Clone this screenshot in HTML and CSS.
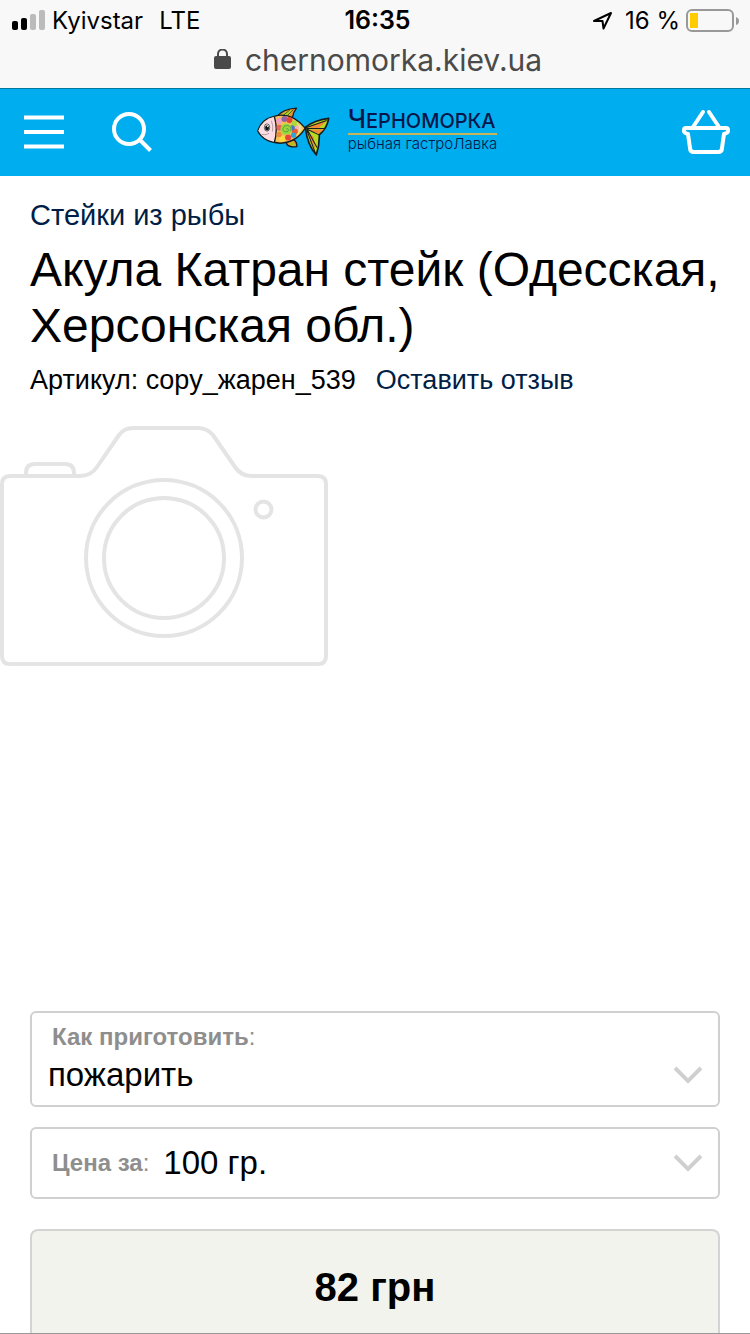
FILE: index.html
```html
<!DOCTYPE html>
<html lang="ru">
<head>
<meta charset="utf-8">
<meta name="viewport" content="width=device-width, initial-scale=1">
<title>Акула Катран стейк (Одесская, Херсонская обл.)</title>
<link rel="stylesheet" href="styles.css">
</head>
<body>
<div class="browser">
  <div class="status">
    <div class="status-side">
      <svg class="signal" viewBox="0 0 34 20" width="34" height="20" aria-hidden="true">
        <rect x="0" y="11" width="6" height="9" rx="2"/>
        <rect x="9" y="8" width="6" height="12" rx="2"/>
        <rect x="18" y="4" width="6" height="16" rx="2" fill="#bbb"/>
        <rect x="27" y="0" width="6" height="20" rx="2" fill="#bbb"/>
      </svg>
      <span class="carrier">Kyivstar</span>
      <span>LTE</span>
    </div>
    <div class="time">16:35</div>
    <div class="status-side status-end">
      <svg class="location" viewBox="0 0 20 20" width="20" height="20" aria-hidden="true">
        <path d="M1 11 18 3 10.500 18.500 9.500 11Z" fill="none" stroke="#000" stroke-width="2" stroke-linejoin="round"/>
      </svg>
      <span>16 %</span>
      <svg class="battery" viewBox="0 0 53 24" width="53" height="24" aria-hidden="true">
        <rect x="1" y="2" width="46" height="21" rx="5" fill="none" stroke="#999" stroke-width="2"/>
        <rect x="4" y="5" width="8" height="15" fill="#fc0"/>
        <path d="M50 9q3 1 3 4t-3 4z" fill="#999"/>
      </svg>
    </div>
  </div>
  <div class="address">
    <svg viewBox="0 0 17 22" width="17" height="22" aria-hidden="true">
      <rect x="0" y="7" width="17" height="13" rx="2" fill="#4a4a4a"/>
      <path d="M4 8V5a4.500 4.500 0 0 1 9 0v3" fill="none" stroke="#4a4a4a" stroke-width="2"/>
    </svg>
    <span>chernomorka.kiev.ua</span>
  </div>
</div>

<header class="header">
  <div class="header-side">
    <button class="icon-button" type="button" aria-label="Меню">
      <svg viewBox="0 0 40 34" width="40" height="34"><path d="M0 2.500h40M0 17h40M0 31.500h40" stroke="#fff" stroke-width="4"/></svg>
    </button>
    <button class="icon-button" type="button" aria-label="Поиск">
      <svg viewBox="0 0 40 40" width="40" height="40" fill="none" stroke="#fff" stroke-width="4"><circle cx="17" cy="17" r="15"/><path d="M27.500 27.500 38.500 38.500"/></svg>
    </button>
  </div>
  <a class="logo" href="#">
    <svg class="fish" viewBox="30 37 218 146" width="73" height="49" aria-hidden="true" stroke-linejoin="round">
      <path d="M91 65Q105 43 148 40Q138 52 136 68Z" fill="#f28a35" stroke="#171b20" stroke-width="4"/>
      <path d="M100 61Q116 48 138 45L125 64Z" fill="#b2d720"/>
      <path d="M108 62 128 46M121 62 138 45" stroke="#171b20" stroke-width="2"/>
      <path d="M117 139Q117 151 128 154Q139 157 149 155Q150 142 139 134Z" fill="#ee8d32" stroke="#171b20" stroke-width="4"/>
      <path d="M124 141q6 9 15 12M133 139q2 8 11 12" fill="none" stroke="#aacc21" stroke-width="4"/>
      <path d="M32 108Q43 73 83 64Q133 51 174 100Q148 143 99 145Q50 142 32 108Z" fill="#f5bf5a" stroke="#171b20" stroke-width="4"/>
      <path d="M34 108Q47 73 82 66Q93 104 82 141Q49 136 34 108Z" fill="#fbdce2"/>
      <path d="M82 66Q93 103 82 142" fill="none" stroke="#171b20" stroke-width="4"/>
      <circle cx="96" cy="79" r="9" fill="#f19fc0"/><circle cx="112" cy="73" r="9" fill="#8f62a8"/>
      <circle cx="127" cy="76" r="9" fill="#e64532"/><circle cx="142" cy="86" r="9" fill="#a9d83b"/>
      <circle cx="154" cy="99" r="9" fill="#f2b3b9"/><circle cx="143" cy="110" r="9" fill="#ee5a32"/>
      <circle cx="139" cy="121" r="8" fill="#2ea4dc"/><circle cx="123" cy="128" r="9" fill="#e8423b"/>
      <circle cx="105" cy="132" r="9" fill="#f7de3b"/><circle cx="96" cy="119" r="8" fill="#ee8b37"/>
      <circle cx="97" cy="99" r="9" fill="#e9655c"/><circle cx="135" cy="99" r="8" fill="#4f75c4"/>
      <circle cx="117" cy="103" r="17" fill="#9bd63d"/>
      <path d="M117 103q6-5 7 2t-8 6q-11-2-8-11t14-8q13 5 8 17" fill="none" stroke="#398e47" stroke-width="2"/>
      <path d="M149 84q15 14 2 36M158 91q7 10 0 20" fill="none" stroke="#edf07a" stroke-width="3"/>
      <ellipse cx="60" cy="98" rx="8" ry="11" fill="#fff" stroke="#171b20" stroke-width="2"/>
      <ellipse cx="60" cy="99" rx="6" ry="8" fill="#111"/><circle cx="62" cy="95" r="2" fill="#fff"/>
      <path d="M44 119q14 3 22-4M73 78q7 17 3 32" fill="none" stroke="#171b20" stroke-width="1"/>
      <path d="M174 98Q201 76 244 71Q240 99 216 120Q217 151 207 180Q182 155 174 98Z" fill="#b4dc20" stroke="#171b20" stroke-width="5"/>
      <path d="M181 98Q202 86 238 79L214 100ZM182 105 231 103 213 117ZM184 114Q190 143 203 163L200 127Z" fill="#f48a35"/>
      <path d="M176 99 238 77M177 101 230 101M177 102 215 120M180 104 209 158M178 104 205 176" fill="none" stroke="#171b20" stroke-width="3"/>
    </svg>
    <span class="logo-text">
      <span class="logo-name"><span class="logo-initial">Ч</span>ЕРНОМОРКА</span>
      <span class="logo-sub">рыбная гастроЛавка</span>
    </span>
  </a>
  <div class="header-side header-end">
    <button class="icon-button" type="button" aria-label="Корзина">
      <svg viewBox="0 0 48 45" width="48" height="45" fill="none" stroke="#fff" stroke-width="4" stroke-linecap="round" stroke-linejoin="round">
        <path d="M11 18 21 3M37 18 27 3M4 19H44Q46 19 46 21V22Q46 24 42 25L40 39Q40 43 36 43H12Q8 43 8 39L6 25Q2 24 2 22V21Q2 19 4 19Z"/>
      </svg>
    </button>
  </div>
</header>

<main class="product">
  <div class="intro">
    <a class="category" href="#">Стейки из рыбы</a>
    <h1 class="title">Акула Катран стейк (Одесская, Херсонская обл.)</h1>
    <div class="meta"><span>Артикул: copy_жарен_539</span><a href="#">Оставить отзыв</a></div>
  </div>
  <div class="gallery">
    <svg viewBox="0 0 328 240" width="328" height="240" fill="none" stroke="#e4e4e4" stroke-width="4" role="img" aria-label="Нет фото">
      <path d="M10 50H80Q91 50 97 41L119 9Q124 2 133 2H198Q207 2 213 9L235 41Q241 50 252 50H318Q326 50 326 58V230Q326 238 318 238H10Q2 238 2 230V58Q2 50 10 50Z"/>
      <path d="M26 50V47Q26 38 35 38H65Q74 38 74 47V50"/>
      <circle cx="164" cy="132" r="78"/><circle cx="164" cy="132" r="60"/><circle cx="263.500" cy="83.500" r="8"/>
    </svg>
  </div>
  <form class="options">
    <div class="field field-stacked">
      <label for="cooking"><b>Как приготовить</b>:</label>
      <div class="picker">
        <select id="cooking"><option>пожарить</option></select>
        <svg class="chevron" viewBox="0 0 28 18" width="28" height="18" aria-hidden="true"><path d="M1 2 14 15 27 2" fill="none" stroke="#d0d0d0" stroke-width="4"/></svg>
      </div>
    </div>
    <div class="field">
      <label for="amount"><b>Цена за</b>:</label>
      <div class="picker">
        <select id="amount"><option>100 гр.</option></select>
        <svg class="chevron" viewBox="0 0 28 18" width="28" height="18" aria-hidden="true"><path d="M1 2 14 15 27 2" fill="none" stroke="#d0d0d0" stroke-width="4"/></svg>
      </div>
    </div>
  </form>
  <div class="price">82 грн</div>
</main>
</body>
</html>
```
FILE: styles.css
```css
* { box-sizing: border-box; }

body {
  display: flex;
  flex-direction: column;
  min-height: 100vh;
  margin: 0;
  border-bottom: 1px solid #999;
  background: #fff;
  color: #000;
  font-family: "Liberation Sans", Arial, sans-serif;
}

svg { display: block; flex: none; }
a { color: #001e46; text-decoration: none; }

.browser {
  padding-bottom: 8px;
  background: #f8f8f8;
  font-family: Inter, sans-serif;
}

.status {
  display: grid;
  grid-template-columns: 1fr auto 1fr;
  align-items: center;
  height: 40px;
  padding: 0 11px 0 12px;
  font-size: 24px;
}

.status-side { display: flex; align-items: center; }
.status-end { justify-content: flex-end; }
.carrier { margin: 0 16px 0 6px; }
.time { padding-left: 4px; font-size: 25px; font-weight: 600; }
.location { margin-right: 12px; }
.battery { margin-left: 6px; }

.address {
  display: flex;
  align-items: center;
  justify-content: center;
  gap: 14px;
  padding-left: 6px;
  color: #4a4a4a;
  font-size: 30px;
  line-height: 40px;
}

.header {
  display: grid;
  grid-template-columns: 1fr auto 1fr;
  align-items: center;
  height: 88px;
  padding: 0 20px 2px 24px;
  border-top: 1px solid #0076a3;
  background: #00aeef;
}

.header-side { display: flex; align-items: center; gap: 48px; }
.header-end { justify-content: flex-end; }

.icon-button {
  padding: 0;
  border: 0;
  background: none;
  cursor: pointer;
}

.logo {
  display: flex;
  align-items: center;
  gap: 18px;
  color: #07164a;
  font-family: Inter, sans-serif;
}

.logo-text { display: flex; flex-direction: column; padding-bottom: 4px; }

.logo-name {
  border-bottom: 2px solid #c9b458;
  font-size: 20px;
  font-weight: 500;
  line-height: 24px;
}

.logo-initial { font-size: 26px; }
.logo-sub { font-size: 15px; font-weight: 300; line-height: 18px; }

.product { display: flex; flex: 1; flex-direction: column; }

.intro { padding: 20px 30px 0; }

.category { display: block; font-size: 29px; line-height: 38px; }

.title {
  margin: 8px 0;
  font-size: 48px;
  font-weight: 400;
  line-height: 56px;
}

.meta {
  display: flex;
  gap: 20px;
  font-size: 27px;
  line-height: 36px;
}

.gallery { min-height: 613px; padding-top: 28px; }

.options {
  display: flex;
  flex-direction: column;
  gap: 20px;
  padding: 0 30px;
}

.field {
  display: flex;
  align-items: center;
  padding: 10px 16px 10px 20px;
  border: 2px solid #d0d0d0;
  border-radius: 6px;
}

.field label { color: #8e8e8e; font-size: 24px; line-height: 28px; }

.picker {
  display: grid;
  flex: 1;
  align-items: center;
  margin-left: 14px;
}

.picker select,
.picker svg { grid-area: 1 / 1; }

.picker select {
  width: 100%;
  height: 48px;
  padding: 0;
  border: 0;
  appearance: none;
  background: none;
  color: #000;
  font: 33px/48px "Liberation Sans", Arial, sans-serif;
}

.chevron { justify-self: end; pointer-events: none; }

.field-stacked {
  flex-direction: column;
  align-items: stretch;
  padding: 10px 16px 6px;
}

.field-stacked label { padding-left: 4px; }
.field-stacked .picker { margin-left: 0; }

.price {
  flex: 1;
  margin: 30px 30px 0;
  padding: 32px 20px 20px;
  border: 2px solid #d4d4d4;
  border-bottom: 0;
  border-radius: 8px 8px 0 0;
  background: #f1f3ec;
  font-size: 40px;
  font-weight: 700;
  line-height: 48px;
  text-align: center;
}
```
